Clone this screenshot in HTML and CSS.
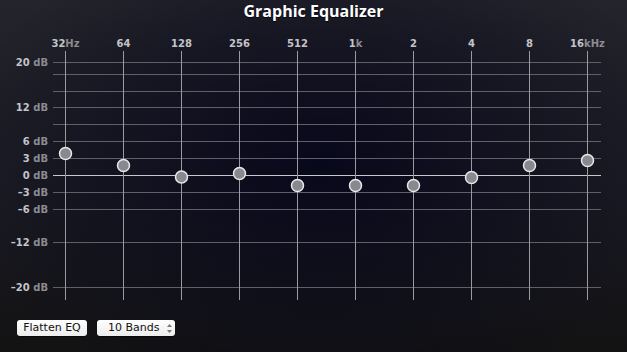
FILE: index.html
```html
<!DOCTYPE html>
<html lang="en">

<head>
    <meta charset="utf-8">
    <meta name="viewport" content="width=device-width, initial-scale=1.0">
    <title>Graphic Equalizer</title>
    <link rel="stylesheet" href="styles.css">
</head>

<body>
    <div id="vindue">
        <h1>Graphic Equalizer</h1>

        <svg id="graf" width="627" height="276" viewBox="0 26 627 276">
            <g class="vandret">
                <line x1="53" x2="601" y1="62.5" y2="62.5" />
                <line x1="53" x2="601" y1="74.5" y2="74.5" />
                <line x1="53" x2="601" y1="91.5" y2="91.5" />
                <line x1="53" x2="601" y1="107.5" y2="107.5" />
                <line x1="53" x2="601" y1="124.5" y2="124.5" />
                <line x1="53" x2="601" y1="141.5" y2="141.5" />
                <line x1="53" x2="601" y1="158.5" y2="158.5" />
                <line x1="53" x2="601" y1="192.5" y2="192.5" />
                <line x1="53" x2="601" y1="209.5" y2="209.5" />
                <line x1="53" x2="601" y1="242.5" y2="242.5" />
                <line x1="53" x2="601" y1="287.5" y2="287.5" />
            </g>
            <line class="nul" x1="53" x2="601" y1="175.5" y2="175.5" />

            <g class="lodret">
                <line x1="65.5" x2="65.5" y1="51" y2="300" />
                <line x1="123.5" x2="123.5" y1="51" y2="300" />
                <line x1="181.5" x2="181.5" y1="51" y2="300" />
                <line x1="239.5" x2="239.5" y1="51" y2="300" />
                <line x1="297.5" x2="297.5" y1="51" y2="300" />
                <line x1="355.5" x2="355.5" y1="51" y2="300" />
                <line x1="413.5" x2="413.5" y1="51" y2="300" />
                <line x1="471.5" x2="471.5" y1="51" y2="300" />
                <line x1="529.5" x2="529.5" y1="51" y2="300" />
                <line x1="587.5" x2="587.5" y1="51" y2="300" />
            </g>

            <g class="db">
                <text x="48" y="66">20 <tspan>dB</tspan></text>
                <text x="48" y="111">12 <tspan>dB</tspan></text>
                <text x="48" y="145">6 <tspan>dB</tspan></text>
                <text x="48" y="162">3 <tspan>dB</tspan></text>
                <text x="48" y="179">0 <tspan>dB</tspan></text>
                <text x="48" y="196">–3 <tspan>dB</tspan></text>
                <text x="48" y="213">–6 <tspan>dB</tspan></text>
                <text x="48" y="246">–12 <tspan>dB</tspan></text>
                <text x="48" y="291">–20 <tspan>dB</tspan></text>
            </g>

            <g class="hz">
                <text x="65.5" y="47">32<tspan>Hz</tspan></text>
                <text x="123.5" y="47">64</text>
                <text x="181.5" y="47">128</text>
                <text x="239.5" y="47">256</text>
                <text x="297.5" y="47">512</text>
                <text x="355.5" y="47">1<tspan>k</tspan></text>
                <text x="413.5" y="47">2</text>
                <text x="471.5" y="47">4</text>
                <text x="529.5" y="47">8</text>
                <text x="587.5" y="47">16<tspan>kHz</tspan></text>
            </g>

            <g class="knap">
                <circle cx="65.5" cy="153.5" r="6" />
                <circle cx="123.5" cy="165.5" r="6" />
                <circle cx="181.5" cy="177" r="6" />
                <circle cx="239.5" cy="173.5" r="6" />
                <circle cx="297.5" cy="185.5" r="6" />
                <circle cx="355.5" cy="185.5" r="6" />
                <circle cx="413.5" cy="185.5" r="6" />
                <circle cx="471.5" cy="177.5" r="6" />
                <circle cx="529.5" cy="165.5" r="6" />
                <circle cx="587.5" cy="160.5" r="6" />
            </g>
        </svg>

        <div id="bund">
            <button class="flad">Flatten EQ</button>
            <div class="vaelg">
                <span>10 Bands</span>
                <svg class="pile" width="5" height="9" viewBox="0 0 5 9">
                    <path d="M2.5 0 L5 3 L0 3 Z M2.5 9 L5 6 L0 6 Z" />
                </svg>
            </div>
        </div>
    </div>
</body>

</html>
```

FILE: styles.css
```css
html,
body,
* {
    margin: 0;
    padding: 0;
}

body {
    width: 627px;
    height: 352px;
    overflow: hidden;
    background-color: #141418;
}

#vindue {
    width: 627px;
    height: 352px;
    background-image:
        radial-gradient(ellipse 380px 240px at 320px 165px, rgba(6, 6, 26, 0.92), rgba(6, 6, 26, 0) 100%),
        linear-gradient(to bottom, #24242c 0%, #1c1c24 55%, #121213 100%);
}

h1 {
    height: 26px;
    font-family: "Open Sans", sans-serif;
    font-weight: 700;
    font-size: 16px;
    line-height: 22px;
    color: white;
    text-align: center;
    text-shadow: 0 1px 1px rgba(0, 0, 0, 0.8);
}

#graf {
    display: block;
}

.vandret line {
    stroke: #5f5f68;
    stroke-width: 1;
}

.nul {
    stroke: #c8c8cc;
    stroke-width: 1;
}

.lodret line {
    stroke: #9a9aa0;
    stroke-width: 1;
}

.db text,
.hz text {
    font-family: "DejaVu Sans", sans-serif;
    font-size: 10px;
    font-weight: 700;
    fill: #c4c4c8;
}

.db text {
    text-anchor: end;
}

.hz text {
    text-anchor: middle;
}

.db tspan,
.hz tspan {
    fill: #8c8c92;
}

.knap circle {
    fill: #88888e;
    stroke: #e8e8ea;
    stroke-width: 1.5;
}

#bund {
    display: flex;
    gap: 10px;
    padding: 18px 0 0 17px;
}

.flad,
.vaelg {
    height: 16px;
    box-sizing: border-box;
    border: none;
    border-radius: 3px;
    background-image: linear-gradient(to bottom, #ffffff, #ececec);
    box-shadow: 0 1px 1px rgba(0, 0, 0, 0.5);
    font-family: "DejaVu Sans", sans-serif;
    font-size: 11px;
    line-height: 16px;
    color: #111;
}

.flad {
    width: 70px;
    text-align: center;
}

.vaelg {
    width: 78px;
    display: flex;
    align-items: center;
    padding-left: 11px;
}

.pile {
    fill: #777;
    margin-left: 8px;
}
```
